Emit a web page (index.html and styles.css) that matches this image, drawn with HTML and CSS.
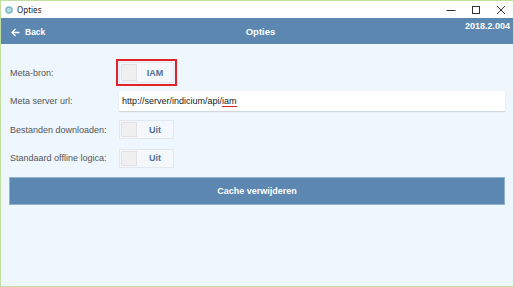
FILE: index.html
```html
<!DOCTYPE html>
<html lang="nl">

<head>
    <meta charset="UTF-8">
    <meta name="viewport" content="width=device-width, initial-scale=1.0">
    <title>Opties</title>
    <link rel="stylesheet" href="styles.css">
</head>

<body>
    <div class="window">
        <div class="titlebar">
            <div class="app-title">
                <svg class="app-icon" width="8" height="8" viewBox="0 0 8 8">
                    <circle cx="4" cy="4" r="3.8" fill="#7fb8c9" />
                    <circle cx="4" cy="4" r="2.2" fill="#b9dde6" />
                </svg>
                <span>Opties</span>
            </div>
            <div class="win-controls">
                <svg width="10" height="10" viewBox="0 0 10 10"><path d="M0.5 5.5h9" stroke="#333" stroke-width="1" /></svg>
                <svg width="10" height="10" viewBox="0 0 10 10"><rect x="1.5" y="1.5" width="7" height="7" fill="none" stroke="#333" stroke-width="1" /></svg>
                <svg width="10" height="10" viewBox="0 0 10 10"><path d="M1 1l8 8M9 1l-8 8" stroke="#333" stroke-width="1" /></svg>
            </div>
        </div>

        <div class="header">
            <div class="back">
                <svg width="9" height="9" viewBox="0 0 9 9">
                    <path d="M8.5 4.5H1M4.5 1L1 4.5L4.5 8" fill="none" stroke="#fff" stroke-width="1.3" />
                </svg>
                <span>Back</span>
            </div>
            <div class="page-title">Opties</div>
            <div class="version">2018.2.004</div>
        </div>

        <div class="content">
            <div class="row row-tall">
                <div class="label">Meta-bron:</div>
                <div class="highlight">
                    <div class="toggle toggle-big">
                        <div class="knob"></div>
                        <div class="toggle-text">IAM</div>
                    </div>
                </div>
            </div>
            <div class="row">
                <div class="label">Meta server url:</div>
                <div class="url-field">http://server/indicium/api/<span class="misspelled">iam</span></div>
            </div>
            <div class="row row-tall">
                <div class="label">Bestanden downloaden:</div>
                <div class="toggle">
                    <div class="knob"></div>
                    <div class="toggle-text">Uit</div>
                </div>
            </div>
            <div class="row">
                <div class="label">Standaard offline logica:</div>
                <div class="toggle">
                    <div class="knob"></div>
                    <div class="toggle-text">Uit</div>
                </div>
            </div>

            <button class="cache-button">Cache verwijderen</button>
        </div>
    </div>
</body>

</html>
```

FILE: styles.css
```css
html,
body {
    margin: 0;
    padding: 0;
}

body {
    font-family: "Liberation Sans", Arial, sans-serif;
    width: 514px;
    height: 287px;
    overflow: hidden;
}

.window {
    width: 514px;
    height: 287px;
    box-sizing: border-box;
    border: 1px solid #c3df9f;
    background-color: #eef6fe;
    display: flex;
    flex-direction: column;
}

.titlebar {
    height: 17px;
    background: #fff;
    display: flex;
    align-items: center;
    justify-content: space-between;
}

.app-title {
    display: flex;
    align-items: center;
    gap: 4px;
    padding-left: 4px;
    font-family: "Noto Sans", sans-serif;
    font-size: 8px;
    color: #222;
}

.win-controls {
    display: flex;
    gap: 15px;
    padding-right: 7px;
}

.header {
    height: 26px;
    background-color: #5b87b0;
    color: #fff;
    display: flex;
    align-items: center;
    justify-content: space-between;
    font-weight: bold;
}

.back {
    display: flex;
    align-items: center;
    gap: 5px;
    padding-left: 10px;
    padding-top: 2px;
    font-size: 8.5px;
    width: 100px;
}

.page-title {
    font-size: 9.5px;
    padding-top: 1px;
}

.version {
    font-size: 9px;
    width: 100px;
    text-align: right;
    align-self: flex-start;
    padding-top: 3px;
    padding-right: 3px;
}

.content {
    padding: 14px 8px 0 8px;
}

.row {
    display: flex;
    align-items: center;
    height: 28px;
}

.row-tall {
    height: 29px;
}

.label {
    width: 109px;
    padding-left: 1px;
    font-size: 9px;
    color: #555;
}

.highlight {
    border: 2px solid #e2222a;
    padding: 1px;
    margin-left: -3px;
    display: flex;
}

.toggle {
    width: 55px;
    height: 19px;
    box-sizing: border-box;
    border: 1px solid #e2e8ee;
    background-color: #f4f8fc;
    display: flex;
    align-items: center;
}

.toggle-big {
    height: 21px;
}

.knob {
    width: 16px;
    height: calc(100% - 2px);
    margin-left: 1px;
    box-sizing: border-box;
    background-color: #f0f0f0;
    border: 1px solid #e2e2e2;
}

.toggle-text {
    flex: 1;
    text-align: center;
    font-size: 9px;
    font-weight: bold;
    color: #4f719a;
}

.url-field {
    flex: 1;
    height: 20px;
    box-sizing: border-box;
    background: #fff;
    box-shadow: 0 1px 1px rgba(0, 0, 0, 0.12);
    display: flex;
    align-items: center;
    padding-left: 3px;
    font-size: 9px;
    color: #222;
}

.misspelled {
    border-bottom: 1px solid #e2222a;
}

.cache-button {
    display: block;
    width: 496px;
    height: 28px;
    margin-top: 5px;
    background-color: #5b87b0;
    border: 1px solid #8fb2d2;
    color: #fff;
    font-family: "Liberation Sans", Arial, sans-serif;
    font-size: 9px;
    font-weight: bold;
    padding: 0;
}
```
